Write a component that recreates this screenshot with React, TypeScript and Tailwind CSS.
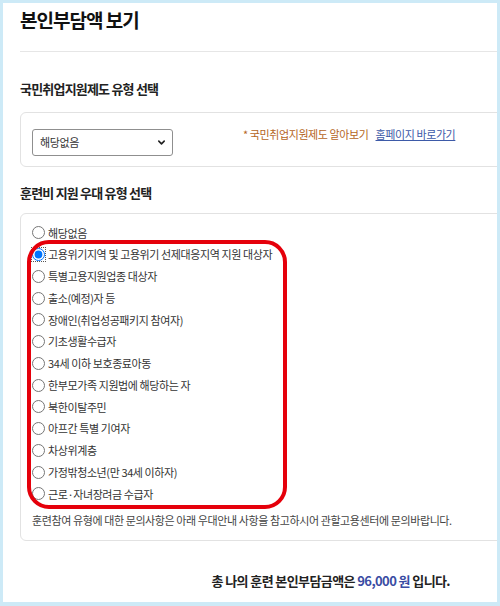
import React from "react";

const options = [
  "해당없음",
  "고용위기지역 및 고용위기 선제대응지역 지원 대상자",
  "특별고용지원업종 대상자",
  "출소(예정)자 등",
  "장애인(취업성공패키지 참여자)",
  "기초생활수급자",
  "34세 이하 보호종료아동",
  "한부모가족 지원법에 해당하는 자",
  "북한이탈주민",
  "아프간 특별 기여자",
  "차상위계층",
  "가정밖청소년(만 34세 이하자)",
  "근로·자녀장려금 수급자",
];

export default function App() {
  return (
    <div
      className="h-[606px] w-[500px] overflow-hidden bg-[#cdeaf7] pb-[4px] pl-[3px] pr-[3px] pt-[3px]"
      style={{ fontFamily: '"Noto Sans CJK KR", "Noto Sans", sans-serif' }}
    >
      <div className="relative h-full overflow-hidden bg-white pl-[17px] pt-[3px]">
        <h1 className="text-[19px] font-bold leading-[28px] tracking-[-1px] text-[#111]">본인부담액 보기</h1>
        <div className="mt-[17px] h-px bg-[#e6e6e6]" />

        <h2 className="mt-[27px] text-[13px] font-bold leading-[20px] tracking-[-0.8px] text-[#222]">
          국민취업지원제도 유형 선택
        </h2>
        <div className="mr-[-20px] mt-[13px] flex h-[55px] items-start rounded-l-[6px] border border-[#e2e2e2] pl-[11px] pt-[16px]">
          <div className="flex h-[27px] w-[141px] items-center justify-between rounded-[3px] border border-[#8f8f8f] pl-[7px] pr-[6px]">
            <span className="text-[11px] tracking-[-0.4px] text-[#333]">해당없음</span>
            <svg width="9" height="9" viewBox="0 0 10 10" fill="none">
              <path d="M2 3.5L5 6.5L8 3.5" stroke="#222" strokeWidth="1.8" strokeLinecap="round" strokeLinejoin="round" />
            </svg>
          </div>
          <div className="ml-[70px] mt-[-4px] flex items-center text-[11px] leading-[18px] tracking-[-0.4px]">
            <span className="text-[#b5651d]">* 국민취업지원제도 알아보기</span>
            <span className="ml-[7px] text-[#3d5aa8] underline">홈페이지 바로가기</span>
          </div>
        </div>

        <h2 className="mt-[16px] text-[13px] font-bold leading-[20px] tracking-[-0.8px] text-[#222]">
          훈련비 지원 우대 유형 선택
        </h2>
        <div className="mr-[-20px] mt-[10px] rounded-l-[6px] border border-[#e2e2e2] pb-[11px] pl-[11px] pt-[8px]">
          {options.map((label, i) => (
            <label key={label} className="flex h-[21.75px] items-center text-[11px] tracking-[-0.4px] text-[#333]">
              <input
                type="radio"
                name="prefer"
                defaultChecked={i === 1}
                className={`m-0 h-[13px] w-[13px] ${i === 1 ? "outline outline-1 outline-dotted outline-[#555]" : ""}`}
              />
              <span className="ml-[3px]">{label}</span>
            </label>
          ))}
          <p className="mt-[6px] text-[11px] leading-[18px] tracking-[-0.4px] text-[#444]">
            훈련참여 유형에 대한 문의사항은 아래 우대안내 사항을 참고하시어 관할고용센터에 문의바랍니다.
          </p>
        </div>

        <div className="mt-[30px] flex justify-end pr-[47px] text-[13px] font-bold leading-[20px] tracking-[-0.6px] text-[#222]">
          <span>
            총 나의 훈련 본인부담금액은 <span className="font-semibold text-[#3a4ca3]">96,000 원</span> 입니다.
          </span>
        </div>

        <div className="pointer-events-none absolute left-[24px] top-[237px] h-[269px] w-[260px] rounded-[22px] border-[4px] border-[#e5000b]" />
      </div>
    </div>
  );
}
